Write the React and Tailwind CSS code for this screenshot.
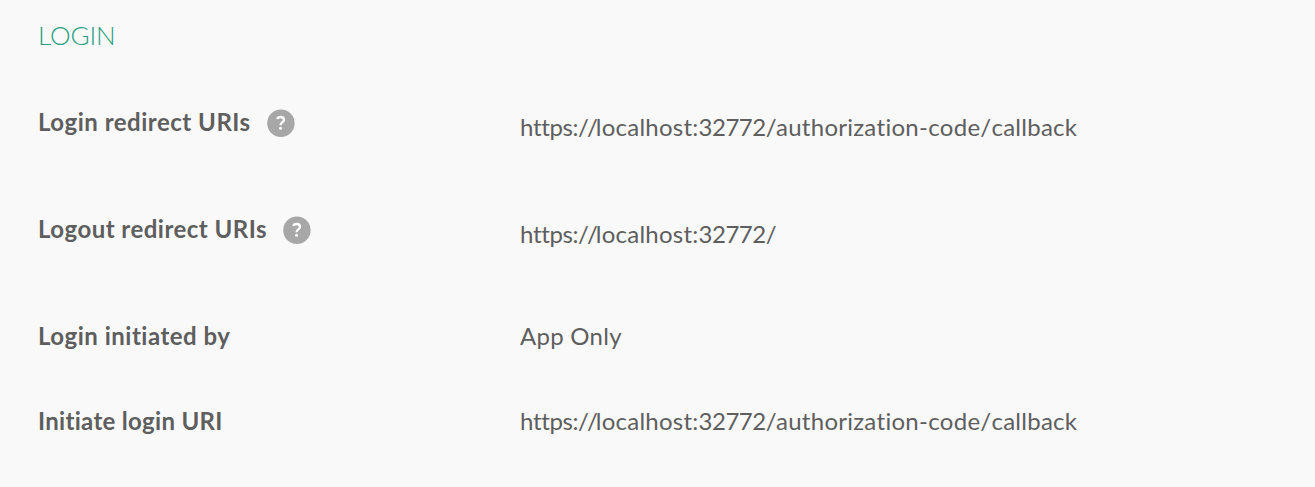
import React from 'react';

function Help() {
  return (
    <svg width="28" height="28" viewBox="0 0 28 28" className="block shrink-0" aria-label="Help">
      <circle cx="13.9" cy="14.2" r="13.7" fill="#a7a7a7" />
      <path d="M10 9.9C10.9 8.5 12.1 8 13.6 8C15.6 8 17 9.1 17 10.9C17 13.1 13.6 13.3 13.5 16.2" fill="none" stroke="#fff" strokeWidth="2.3" />
      <circle cx="13.5" cy="19.3" r="1.5" fill="#fff" />
    </svg>
  );
}

function LocalUrl({ path }) {
  return (
    <span className="[font-kerning:none]">
      <span className="tracking-[-0.4px]">https:</span>
      <span className="tracking-[-2px]">//</span>
      <span className="tracking-[0.25px]">localhost:</span>
      <span className="tracking-[-0.5px]">32772/</span>
      {path && <span className="tracking-[0.26px]">{path}</span>}
    </span>
  );
}

const rows = [
  { label: 'Login redirect URIs', help: true, value: <LocalUrl path="authorization-code/callback" />, height: 'h-[107px]', offset: 'pt-[5px]', labelStyle: 'w-[213px] tracking-[0.5px]' },
  { label: 'Logout redirect URIs', help: true, value: <LocalUrl />, height: 'h-[107px]', offset: 'pt-[5px]', labelStyle: 'w-[229px] tracking-[0.47px]' },
  { label: 'Login initiated by', value: 'App Only', height: 'h-[85px]', offset: 'tracking-[0.28px]', labelStyle: 'tracking-[0.5px]' },
  { label: 'Initiate login URI', value: <LocalUrl path="authorization-code/callback" />, height: 'h-[60px]', offset: '', labelStyle: 'tracking-[0.3px]' },
];

export default function App() {
  return (
    <main className="h-[487px] w-full overflow-hidden bg-[#f9f9f9] pl-[38px] pt-[20px] text-[24px] leading-[32px] text-[#5e5e5e] [font-family:Lato,sans-serif] [font-variant-ligatures:none]">
      <h1 className="h-[86px] text-[26px] leading-[31px] font-light tracking-[-0.1px] text-[#27a081]">LOGIN</h1>
      {rows.map((row) => (
        <div key={row.label} className={'flex ' + row.height}>
          <div className="flex w-[482px] shrink-0 gap-[16px]">
            <span className={'shrink-0 whitespace-nowrap font-bold ' + row.labelStyle}>{row.label}</span>
            {row.help && <span className="pt-[3px]"><Help /></span>}
          </div>
          <span className={'whitespace-nowrap ' + row.offset}>{row.value}</span>
        </div>
      ))}
    </main>
  );
}
